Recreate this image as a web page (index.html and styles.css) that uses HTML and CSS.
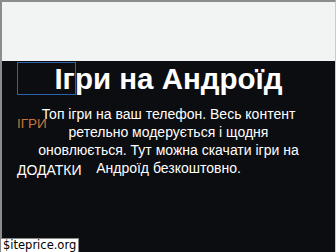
FILE: index.html
```html
<!DOCTYPE html>
<html lang="uk">
  <head>
    <meta charset="UTF-8" />
    <meta name="viewport" content="width=device-width, initial-scale=1.0" />
    <title>Ігри на Андроїд</title>
    <link rel="stylesheet" href="styles.css">
  </head>
  <body>
    <div class="frame">
      <div class="topbar"></div>
      <div class="hero">
        <div class="logo-box"></div>
        <h1>Ігри на Андроїд</h1>
        <p class="intro">
          Топ ігри на ваш телефон. Весь контент ретельно модерується і щодня
          оновлюється. Тут можна скачати ігри на Андроїд безкоштовно.
        </p>
        <ul class="menu">
          <li class="menu-games">ІГРИ</li>
          <li class="menu-apps">ДОДАТКИ</li>
        </ul>
      </div>
    </div>
    <div class="badge">$iteprice.org</div>
  </body>
</html>
```

FILE: styles.css
```css
html,
body {
  margin: 0;
  padding: 0;
  height: 100%;
  overflow: hidden;
}
body {
  font-family: "Liberation Sans", Arial, sans-serif;
  background: #0b0d10;
}
.frame {
  height: 100%;
  box-sizing: border-box;
  border-top: 2px solid #8c8c8c;
  border-left: 2px solid #8c8c8c;
  border-right: 1px solid #c8cacb;
  display: flex;
  flex-direction: column;
}
.topbar {
  height: 59px;
  background-color: #f2f3f3;
}
.hero {
  position: relative;
  flex: 1;
  background-color: #0b0d10;
  color: #ffffff;
  text-align: center;
  padding: 0 26px;
}
.logo-box {
  position: absolute;
  left: 15px;
  top: 1px;
  width: 57px;
  height: 31px;
  border: 1px solid #2d62ad;
}
h1 {
  margin: 0;
  padding-top: 1px;
  font-size: 29.5px;
  line-height: 34px;
  font-weight: bold;
}
.intro {
  margin: 9px 0 0;
  font-size: 14px;
  line-height: 18px;
}
.menu {
  list-style: none;
  margin: 0;
  padding: 0;
}
.menu li {
  position: absolute;
  left: 15px;
}
.menu-games {
  top: 55px;
  font-size: 13.5px;
  color: #c8743c;
}
.menu-apps {
  top: 101px;
  font-size: 14px;
  color: #ffffff;
}
.badge {
  position: absolute;
  left: 0;
  bottom: 0;
  padding: 0 2px;
  background: #ffffff;
  color: #000000;
  font-family: "DejaVu Sans", Verdana, sans-serif;
  font-size: 11.5px;
  line-height: 13px;
  border: 1px solid #888888;
  border-bottom: none;
}
```
